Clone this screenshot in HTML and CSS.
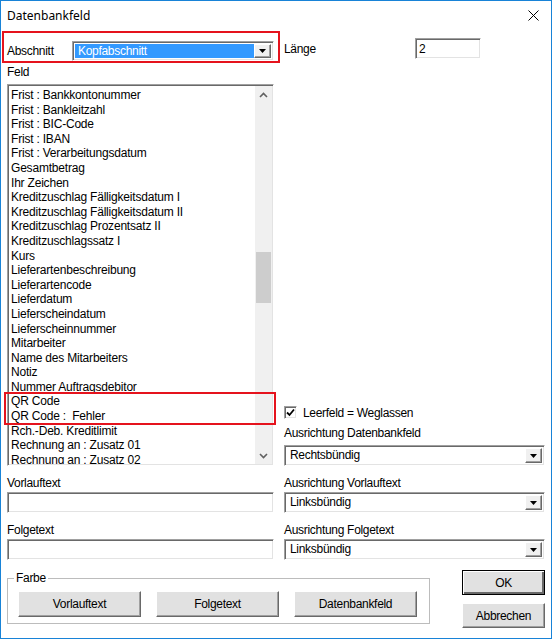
FILE: index.html
```html
<!DOCTYPE html>
<html>
<head>
    <title>Datenbankfeld</title>
    <link rel="stylesheet" href="styles.css">
</head>
<body>
    <div class="window">
        <div class="titlebar">
            <span class="title">Datenbankfeld</span>
            <svg class="close" width="11" height="11" viewBox="0 0 11 11">
                <path d="M0.5 0.5 L10.5 10.5 M10.5 0.5 L0.5 10.5" stroke="#000" stroke-width="1" fill="none"/>
            </svg>
        </div>

        <div class="content">
            <div class="top">
                <div class="left">
                    <div class="section-row">
                        <span class="caption">Abschnitt</span>
                        <div class="combo">
                            <span class="value selected">Kopfabschnitt</span>
                            <span class="drop"><svg width="7" height="4" viewBox="0 0 7 4"><path d="M0 0 H7 L3.5 4 Z" fill="#000"/></svg></span>
                        </div>
                    </div>

                    <div class="label feld">Feld</div>

                    <div class="listbox">
                        <ul class="items">
                            <li>Frist : Bankkontonummer</li>
                            <li>Frist : Bankleitzahl</li>
                            <li>Frist : BIC-Code</li>
                            <li>Frist : IBAN</li>
                            <li>Frist : Verarbeitungsdatum</li>
                            <li>Gesamtbetrag</li>
                            <li>Ihr Zeichen</li>
                            <li>Kreditzuschlag Fälligkeitsdatum I</li>
                            <li>Kreditzuschlag Fälligkeitsdatum II</li>
                            <li>Kreditzuschlag Prozentsatz II</li>
                            <li>Kreditzuschlagssatz I</li>
                            <li>Kurs</li>
                            <li>Lieferartenbeschreibung</li>
                            <li>Lieferartencode</li>
                            <li>Lieferdatum</li>
                            <li>Lieferscheindatum</li>
                            <li>Lieferscheinnummer</li>
                            <li>Mitarbeiter</li>
                            <li>Name des Mitarbeiters</li>
                            <li>Notiz</li>
                            <li>Nummer Auftragsdebitor</li>
                            <li>QR Code</li>
                            <li>QR Code :&nbsp; Fehler</li>
                            <li>Rch.-Deb. Kreditlimit</li>
                            <li>Rechnung an : Zusatz 01</li>
                            <li>Rechnung an : Zusatz 02</li>
                        </ul>
                        <div class="scrollbar">
                            <span class="arrow"><svg width="9" height="6" viewBox="0 0 9 6"><path d="M1 5 L4.5 1.5 L8 5" stroke="#606060" stroke-width="1.6" fill="none"/></svg></span>
                            <div class="track"><div class="thumb"></div></div>
                            <span class="arrow"><svg width="9" height="6" viewBox="0 0 9 6"><path d="M1 1 L4.5 4.5 L8 1" stroke="#606060" stroke-width="1.6" fill="none"/></svg></span>
                        </div>
                    </div>

                    <div class="mark-qr"></div>
                </div>

                <div class="right">
                    <div class="length-row">
                        <span class="caption">Länge</span>
                        <div class="field length">2</div>
                    </div>
                    <div class="spacer"></div>
                    <div class="check">
                        <span class="box"><svg width="9" height="9" viewBox="0 0 9 9"><path d="M1 4.5 L3.5 7 L8 1.5" stroke="#000" stroke-width="1.8" fill="none"/></svg></span>
                        <span>Leerfeld = Weglassen</span>
                    </div>
                    <div class="label">Ausrichtung Datenbankfeld</div>
                    <div class="combo">
                        <span class="value">Rechtsbündig</span>
                        <span class="drop"><svg width="7" height="4" viewBox="0 0 7 4"><path d="M0 0 H7 L3.5 4 Z" fill="#000"/></svg></span>
                    </div>
                </div>
            </div>

            <div class="pairs">
                <div class="pair">
                    <div class="label">Vorlauftext</div>
                    <div class="field"></div>
                    <div class="label">Folgetext</div>
                    <div class="field"></div>
                </div>
                <div class="pair">
                    <div class="label">Ausrichtung Vorlauftext</div>
                    <div class="combo">
                        <span class="value">Linksbündig</span>
                        <span class="drop"><svg width="7" height="4" viewBox="0 0 7 4"><path d="M0 0 H7 L3.5 4 Z" fill="#000"/></svg></span>
                    </div>
                    <div class="label">Ausrichtung Folgetext</div>
                    <div class="combo">
                        <span class="value">Linksbündig</span>
                        <span class="drop"><svg width="7" height="4" viewBox="0 0 7 4"><path d="M0 0 H7 L3.5 4 Z" fill="#000"/></svg></span>
                    </div>
                </div>
            </div>

            <div class="footer">
                <fieldset class="group">
                    <legend>Farbe</legend>
                    <div class="group-buttons">
                        <button class="btn">Vorlauftext</button>
                        <button class="btn">Folgetext</button>
                        <button class="btn">Datenbankfeld</button>
                    </div>
                </fieldset>
                <div class="actions">
                    <button class="btn default">OK</button>
                    <button class="btn">Abbrechen</button>
                </div>
            </div>
        </div>
    </div>
</body>
</html>
```

FILE: styles.css
```css
* {
    box-sizing: border-box;
}

html, body {
    margin: 0;
    padding: 0;
    background: #fff;
}

body {
    font-family: "Liberation Sans", Arial, sans-serif;
    font-size: 12px;
    letter-spacing: -0.3px;
    color: #000;
}

.window {
    width: 552px;
    height: 639px;
    border: 1px solid #1883d7;
    background: #fff;
    overflow: hidden;
}

.titlebar {
    height: 30px;
    display: flex;
    align-items: center;
    justify-content: space-between;
    padding: 0 12px 2px 6px;
}

.title {
    font-family: "Noto Sans", sans-serif;
    font-size: 12px;
    letter-spacing: 0;
}

.content {
    padding: 0 6px;
}

.top,
.pairs {
    display: grid;
    grid-template-columns: 267px 261px;
    column-gap: 10px;
}

.left {
    position: relative;
}

.section-row {
    display: flex;
    align-items: center;
    height: 32px;
    margin: 0 -6px 0 -5px;
    padding: 8px 4px 0 3px;
    border: 2px solid #e5131d;
}

.section-row .caption {
    width: 65px;
    flex: none;
}

.label {
    line-height: 14px;
    height: 14px;
}

.feld {
    margin-top: 2px;
    margin-bottom: 5px;
}

/* sunken controls */
.field,
.combo,
.listbox {
    border: 1px solid;
    border-color: #a0a0a0 #fff #fff #a0a0a0;
    box-shadow: inset 1px 1px 0 #696969, inset -1px -1px 0 #e3e3e3;
    background: #fff;
}

.field {
    height: 21px;
    padding: 3px 3px 0;
    line-height: 14px;
}

.combo {
    display: flex;
    height: 21px;
    padding: 2px;
}

.section-row .combo {
    flex: 1;
    height: 20px;
}

.combo .value {
    flex: 1;
    padding-left: 3px;
    line-height: 15px;
}

.combo .value.selected {
    background: #3399ff;
    color: #fff;
}

.combo .drop {
    width: 17px;
    flex: none;
    display: flex;
    align-items: center;
    justify-content: center;
    background: #f0f0f0;
    border: 1px solid;
    border-color: #fff #696969 #696969 #fff;
    box-shadow: inset -1px -1px 0 #a0a0a0;
}

/* listbox */
.listbox {
    display: flex;
    height: 382px;
    padding: 1px;
}

.items {
    flex: 1;
    margin: 0;
    padding: 2px 0 0 2px;
    list-style: none;
    overflow: hidden;
    letter-spacing: -0.2px;
}

.items li {
    height: 14.6px;
    line-height: 14.6px;
    white-space: nowrap;
}

.scrollbar {
    width: 17px;
    display: flex;
    flex-direction: column;
    background: #f0f0f0;
}

.scrollbar .arrow {
    height: 17px;
    display: flex;
    align-items: center;
    justify-content: center;
}

.track {
    flex: 1;
}

.thumb {
    margin: 149px 1px 0;
    height: 51px;
    background: #cdcdcd;
}

.mark-qr {
    position: absolute;
    left: -3px;
    top: 361px;
    width: 272px;
    height: 33px;
    border: 2px solid #e5131d;
}

/* right column */
.right {
    display: flex;
    flex-direction: column;
}

.length-row {
    display: flex;
    align-items: center;
    padding-top: 7px;
}

.length-row .caption {
    width: 131px;
}

.field.length {
    width: 66px;
}

.spacer {
    flex: 1;
}

.check {
    display: flex;
    align-items: center;
    gap: 6px;
    height: 13px;
    margin-bottom: 7px;
}

.check .box {
    width: 13px;
    height: 13px;
    display: flex;
    align-items: center;
    justify-content: center;
    border: 1px solid;
    border-color: #a0a0a0 #fff #fff #a0a0a0;
    box-shadow: inset 1px 1px 0 #696969, inset -1px -1px 0 #e3e3e3;
    background: #fff;
}

.right .label {
    margin-bottom: 5px;
}

/* label / input pairs */
.pair .label {
    margin-top: 10px;
    margin-bottom: 2px;
}

/* footer */
.footer {
    display: flex;
    justify-content: space-between;
    align-items: flex-start;
}

.group {
    width: 423px;
    margin: 11px 0 0;
    padding: 6px 12px 6px 10px;
    border: 1px solid #bcbcbc;
    min-width: 0;
}

.group legend {
    padding: 0 2px;
    margin-left: -4px;
    line-height: 14px;
}

.group-buttons {
    display: flex;
    gap: 15px;
}

.btn {
    font-family: "Liberation Sans", Arial, sans-serif;
    font-size: 12px;
    letter-spacing: -0.3px;
    color: #000;
    width: 123px;
    height: 26px;
    padding: 0;
    background: #e1e1e1;
    border: 1px solid;
    border-color: #fff #696969 #696969 #fff;
    box-shadow: inset -1px -1px 0 #a0a0a0;
}

.actions {
    width: 83px;
    margin-top: 10px;
    display: flex;
    flex-direction: column;
    gap: 8px;
}

.actions .btn {
    width: 83px;
    height: 25px;
}

.btn.default {
    border-color: #000;
    box-shadow: inset 1px 1px 0 #fff, inset -2px -2px 0 #696969;
}
```
